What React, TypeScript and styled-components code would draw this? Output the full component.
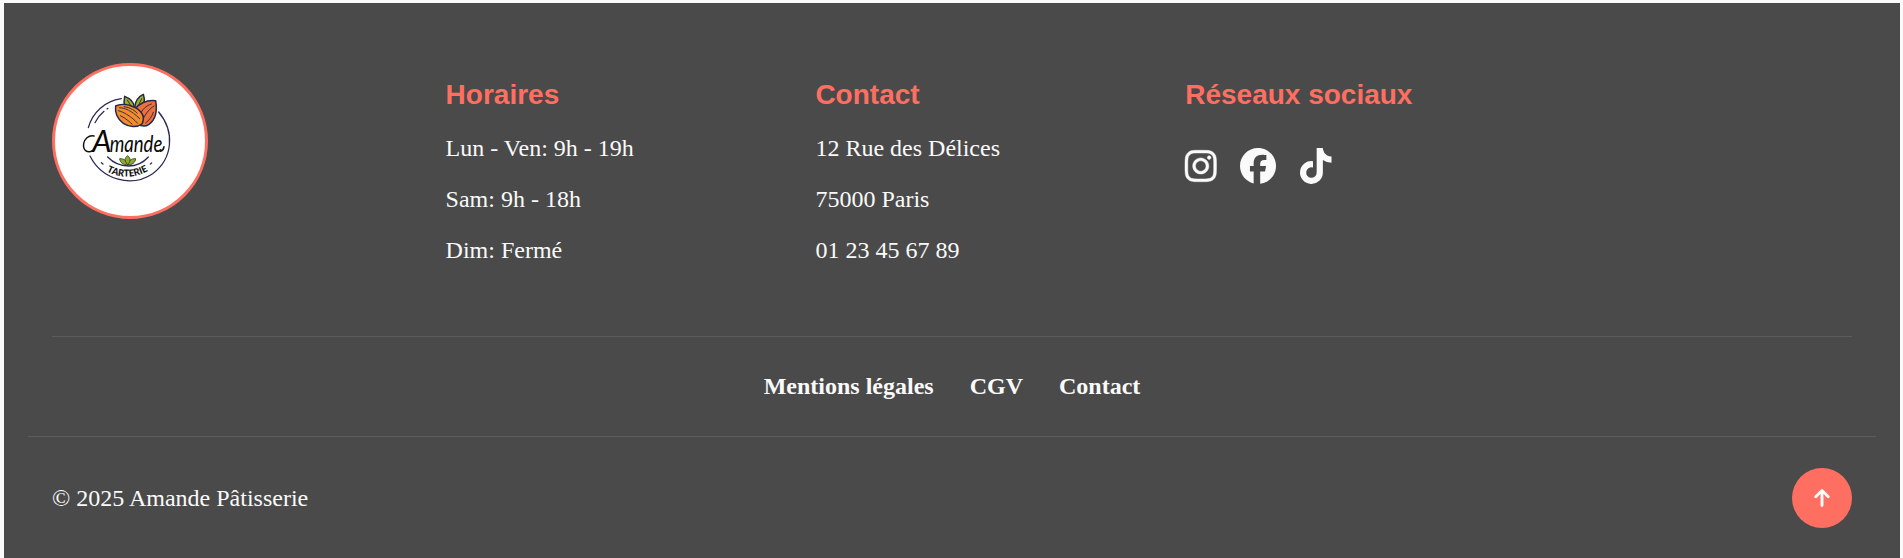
import React from "react";
import styled, { createGlobalStyle } from "styled-components";
import { FaArrowUp, FaFacebook, FaInstagram, FaTiktok } from "react-icons/fa6";

const CORAL = "#ff6f61";
const LIGHT = "#fafafa";

const GlobalStyle = createGlobalStyle`
  * { box-sizing: border-box; }
  body {
    margin: 0;
    background: #fafafa;
    font-family: "Liberation Serif", "Times New Roman", serif;
    font-size: 24px;
    overflow: hidden;
  }
`;

const Page = styled.div`
  height: 558px;
  padding: 3px 3px 0 4px;
`;

const FooterRoot = styled.footer`
  display: flex;
  flex-direction: column;
  height: 100%;
  padding: 60px 24px 0;
  background: #4a4a4a;
  color: ${LIGHT};
`;

const Columns = styled.div`
  display: grid;
  grid-template-columns: 393.6px repeat(3, 369.8px) 1fr;
  height: 274px;
  margin: 0 24px;
  border-bottom: 1px solid #5c5c5c;
`;

const LogoFrame = styled.div`
  width: 156px;
  height: 156px;
  border: 3px solid ${CORAL};
  border-radius: 50%;
  background: #fff;
  overflow: hidden;
`;

const LogoDrawing = styled.svg`
  display: block;
  width: 150px;
  height: 150px;
`;

const Column = styled.section`
  display: flex;
  flex-direction: column;
  padding-top: 15px;
`;

const Heading = styled.h3`
  margin: 0 0 23px;
  color: ${CORAL};
  font: 700 28px/34px "Liberation Sans", Arial, sans-serif;
`;

const Line = styled.p`
  margin: 0 0 24px;
  line-height: 27px;
`;

const Socials = styled.div`
  display: flex;
  align-items: center;
  gap: 23.5px;
  margin-top: 13px;
`;

const SocialLink = styled.a<{ $width: number; $weight?: number }>`
  display: flex;
  color: ${LIGHT};
  svg {
    width: ${({ $width }) => $width}px;
    height: 36px;
    stroke-width: ${({ $weight = 0 }) => $weight};
    overflow: visible;
  }
`;

const LegalNav = styled.nav`
  display: flex;
  justify-content: center;
  align-items: center;
  gap: 36px;
  height: 100px;
  border-bottom: 1px solid #5c5c5c;
`;

const LegalLink = styled.a`
  color: ${LIGHT};
  font-weight: 700;
`;

const Bottom = styled.div`
  display: flex;
  justify-content: space-between;
  align-items: center;
  height: 60px;
  margin: 31px 24px 0;
`;

const TopButton = styled.button`
  display: flex;
  align-items: center;
  justify-content: center;
  width: 60px;
  height: 60px;
  padding: 0 1px 1px 0;
  border: 0;
  border-radius: 50%;
  background: ${CORAL};
  color: #fff;
  svg { width: 16px; height: 20px; stroke-width: 8; overflow: visible; }
`;

const Logo = () => (
  <LogoFrame>
    <LogoDrawing viewBox="45 48 450 450" fill="none" strokeLinecap="round" strokeLinejoin="round">
      <g stroke="#292952" strokeWidth="3.8">
        <path d="M145 233C157 188 194 153 244 146" />
        <path d="M356 186C406 246 398 326 338 371C275 413 187 391 150 318" />
        <path d="M165 218C173 202 181 193 192 184M201 177l3-2" />
        <path d="M203 321C238 357 293 357 325 321" />
        <path d="M184 338l5 4M331 342l4-3" />
      </g>
      <g stroke="#27264c" strokeWidth="4.5">
        <path fill="#9caf28" d="M254 169C251 158 252 149 254 139C270 145 281 154 283 171Z" />
        <path fill="#9caf28" d="M284 172C286 153 292 141 310 133C316 151 314 165 301 177Z" />
        <path d="M262 150L274 170M305 146L293 171" strokeWidth="2.8" />
        <path fill="#ed713a" d="M285 176C303 157 327 149 347 152C352 182 347 209 327 223C315 231 302 228 293 222Z" />
        <path d="M334 162C319 167 306 178 301 193M342 168C326 178 311 197 306 217M340 187C335 202 326 212 317 219" strokeWidth="2.8" />
        <path fill="#f58c2c" d="M227 168C242 160 266 163 286 173C305 184 316 201 306 222C290 234 267 231 250 220C232 208 224 187 227 168Z" />
        <path d="M238 173C258 174 278 185 299 206M252 170C266 172 280 177 292 190M235 182C254 187 277 202 293 220M241 197C254 203 265 212 276 222" strokeWidth="2.8" strokeDasharray="26 3 16 3" />
      </g>
      <g stroke="#34411f" strokeWidth="2.6" fill="#92a931">
        <path d="M263 344C250 346 240 338 239 326C253 325 261 334 263 344Z" />
        <path d="M263 344C276 346 286 338 287 326C273 325 265 334 263 344Z" />
        <path d="M263 344C252 332 254 323 263 317C273 325 273 334 263 344Z" />
      </g>
      <path
        d="M162 258C145 255 133 267 131 281C128 302 143 311 159 301"
        stroke="#111"
        strokeWidth="4.5"
      />
      <path d="M362 304C368 302 371 297 372 290" stroke="#111" strokeWidth="4.5" />
      <text y="307" fill="#080808" fontFamily="Lato, sans-serif" fontStyle="italic">
        <tspan x="157" fontSize="94" textLength="58" lengthAdjust="spacingAndGlyphs">A</tspan>
        <tspan x="209" fontSize="72" textLength="158" lengthAdjust="spacingAndGlyphs">mande</tspan>
      </text>
      <path id="tarterie-arc" d="M193 361Q263 400 331 359" />
      <text fill="#111" fontFamily="Lato, sans-serif" fontWeight="900" fontSize="29" textAnchor="middle">
        <textPath href="#tarterie-arc" startOffset="50%" textLength="130" lengthAdjust="spacingAndGlyphs">
          TARTERIE
        </textPath>
      </text>
    </LogoDrawing>
  </LogoFrame>
);

const INFO = [
  { title: "Horaires", lines: ["Lun - Ven: 9h - 19h", "Sam: 9h - 18h", "Dim: Fermé"] },
  { title: "Contact", lines: ["12 Rue des Délices", "75000 Paris", "01 23 45 67 89"] },
];

export default function App() {
  return (
    <Page>
      <GlobalStyle />
      <FooterRoot>
        <Columns>
          <Logo />
          {INFO.map(({ title, lines }) => (
            <Column key={title}>
              <Heading>{title}</Heading>
              {lines.map((line) => (
                <Line key={line}>{line}</Line>
              ))}
            </Column>
          ))}
          <Column>
            <Heading>Réseaux sociaux</Heading>
            <Socials>
              <SocialLink $width={31.5} $weight={6} aria-label="Instagram"><FaInstagram /></SocialLink>
              <SocialLink $width={36} aria-label="Facebook"><FaFacebook /></SocialLink>
              <SocialLink $width={31.5} aria-label="TikTok"><FaTiktok /></SocialLink>
            </Socials>
          </Column>
        </Columns>
        <LegalNav>
          <LegalLink>Mentions légales</LegalLink>
          <LegalLink>CGV</LegalLink>
          <LegalLink>Contact</LegalLink>
        </LegalNav>
        <Bottom>
          <span>© 2025 Amande Pâtisserie</span>
          <TopButton aria-label="Haut de page"><FaArrowUp /></TopButton>
        </Bottom>
      </FooterRoot>
    </Page>
  );
}
